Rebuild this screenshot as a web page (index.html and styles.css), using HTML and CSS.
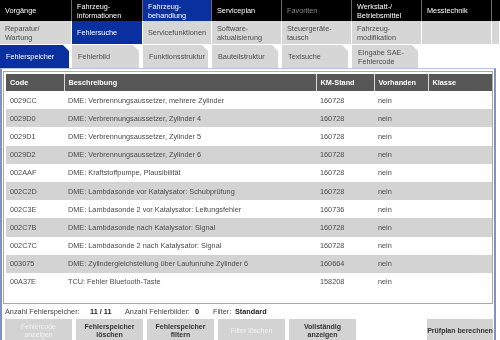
FILE: index.html
```html
<!DOCTYPE html>
<html lang="de">
<head>
<meta charset="utf-8">
<link rel="stylesheet" href="styles.css">
</head>
<body>
<div class="app">
  <nav class="nav nav-main">
    <div class="cell">Vorgänge</div>
    <div class="cell">Fahrzeug-<br>informationen</div>
    <div class="cell active">Fahrzeug-<br>behandlung</div>
    <div class="cell">Serviceplan</div>
    <div class="cell disabled">Favoriten</div>
    <div class="cell">Werkstatt-/<br>Betriebsmittel</div>
    <div class="cell">Messtechnik</div>
    <div class="cell"></div>
  </nav>
  <nav class="nav nav-sub">
    <div class="cell">Reparatur/<br>Wartung</div>
    <div class="cell active">Fehlersuche</div>
    <div class="cell">Servicefunktionen</div>
    <div class="cell">Software-<br>aktualisierung</div>
    <div class="cell">Steuergeräte-<br>tausch</div>
    <div class="cell">Fahrzeug-<br>modifikation</div>
    <div class="cell"></div>
    <div class="cell"></div>
  </nav>
  <nav class="tabs">
    <div class="tab active">Fehlerspeicher</div>
    <div class="tab">Fehlerbild</div>
    <div class="tab">Funktionsstruktur</div>
    <div class="tab">Bauteilstruktur</div>
    <div class="tab">Textsuche</div>
    <div class="tab">Eingabe SAE-<br>Fehlercode</div>
  </nav>
  <section class="panel">
    <div class="listbox">
      <table class="grid">
        <thead>
          <tr><th class="c-code">Code</th><th class="c-desc">Beschreibung</th><th class="c-km">KM-Stand</th><th class="c-vor">Vorhanden</th><th class="c-kl">Klasse</th></tr>
        </thead>
        <tbody>
          <tr><td>0029CC</td><td>DME: Verbrennungsaussetzer, mehrere Zylinder</td><td>160728</td><td>nein</td><td></td></tr>
          <tr><td>0029D0</td><td>DME: Verbrennungsaussetzer, Zylinder 4</td><td>160728</td><td>nein</td><td></td></tr>
          <tr><td>0029D1</td><td>DME: Verbrennungsaussetzer, Zylinder 5</td><td>160728</td><td>nein</td><td></td></tr>
          <tr><td>0029D2</td><td>DME: Verbrennungsaussetzer, Zylinder 6</td><td>160728</td><td>nein</td><td></td></tr>
          <tr><td>002AAF</td><td>DME: Kraftstoffpumpe, Plausibilität</td><td>160728</td><td>nein</td><td></td></tr>
          <tr><td>002C2D</td><td>DME: Lambdasonde vor Katalysator: Schubprüfung</td><td>160728</td><td>nein</td><td></td></tr>
          <tr><td>002C3E</td><td>DME: Lambdasonde 2 vor Katalysator: Leitungsfehler</td><td>160736</td><td>nein</td><td></td></tr>
          <tr><td>002C7B</td><td>DME: Lambdasonde nach Katalysator: Signal</td><td>160728</td><td>nein</td><td></td></tr>
          <tr><td>002C7C</td><td>DME: Lambdasonde 2 nach Katalysator: Signal</td><td>160728</td><td>nein</td><td></td></tr>
          <tr><td>003075</td><td>DME: Zylindergleichstellung über Laufunruhe Zylinder 6</td><td>160664</td><td>nein</td><td></td></tr>
          <tr><td>00A37E</td><td>TCU: Fehler Bluetooth-Taste</td><td>158208</td><td>nein</td><td></td></tr>
        </tbody>
      </table>
    </div>
    <div class="status">
      <span class="lbl l1">Anzahl Fehlerspeicher:</span><b class="val v1">11 / 11</b>
      <span class="lbl l2">Anzahl Fehlerbilder:</span><b class="val v2">0</b>
      <span class="lbl l3">Filter:</span><b class="val">Standard</b>
    </div>
    <div class="buttons">
      <button class="btn" disabled>Fehlercode<br>anzeigen</button>
      <button class="btn">Fehlerspeicher<br>löschen</button>
      <button class="btn">Fehlerspeicher<br>filtern</button>
      <button class="btn" disabled>Filter löschen</button>
      <button class="btn">Vollständig<br>anzeigen</button>
      <span class="spacer"></span>
      <button class="btn wide">Prüfplan berechnen</button>
    </div>
  </section>
</div>
</body>
</html>
```

FILE: styles.css
```css
* { box-sizing: border-box; }
html, body { margin: 0; padding: 0; background: #fff; }
body {
  font-family: "Liberation Sans", Arial, sans-serif;
  font-size: 7.3px;
  line-height: 9px;
  color: #333;
  width: 500px;
  height: 340px;
  overflow: hidden;
}
.app { width: 500px; opacity: 0.999; will-change: transform; }

.nav {
  display: grid;
  grid-template-columns: 72px 71px 69px 70px 70px 70px 70px 1fr;
}
.nav .cell {
  display: flex;
  align-items: center;
  padding-left: 5px;
}
.nav-main { background: #000; height: 21px; }
.nav-main .cell { color: #fff; border-right: 1px solid #6a6a6a; }
.nav-main .cell:last-child { border-right: 0; }
.nav-main .cell.disabled { color: #8a8a8a; }
.nav-main .cell.active { background: #0a2f9f; }

.nav-sub { height: 23px; background: #fff; }
.nav-sub .cell { background: #d6d6d6; color: #4a4a4a; border-right: 1px solid #fff; }
.nav-sub .cell.active { background: #0a2f9f; color: #fff; }

.tabs {
  display: grid;
  grid-template-columns: 72px 71px 69px 70px 70px 70px 1fr;
  height: 24px;
  padding-top: 1px;
}
.tab {
  margin-right: 4px;
  background: linear-gradient(225deg, transparent 4px, #d6d6d6 4.5px);
  color: #4a4a4a;
  display: flex;
  align-items: center;
  padding-left: 6px;
}
.tab:first-child { margin-right: 3px; }
.tab.active { background: linear-gradient(225deg, transparent 4px, #0a2f9f 4.5px); color: #fff; }

.panel {
  border-top: 1px solid #b7c4e6;
  border-left: 2px solid #8291bf;
  border-right: 2px solid #8291bf;
  width: 496px;
  height: 272px;
}
.listbox {
  margin: 2px 1px 0 1px;
  border: 1px solid #a8a8a8;
  height: 233px;
  padding: 2px 2px 0 2px;
}
.grid {
  border-collapse: collapse;
  table-layout: fixed;
  width: 486px;
}
.grid th {
  background: #575757;
  color: #fff;
  font-weight: bold;
  text-align: left;
  height: 17px;
  padding: 0 0 0 4px;
  border-right: 1px solid #d8d8d8;
}
.grid th:last-child { border-right: 0; }
.c-code { width: 58px; }
.c-desc { width: 252px; }
.c-km { width: 58px; }
.c-vor { width: 54px; }
.c-kl { width: 64px; }
.grid td {
  height: 18.2px;
  padding: 0 0 0 4px;
  color: #4a4a4a;
  white-space: nowrap;
}
.grid tbody tr:nth-child(even) td { background: #d3d3d3; }

.status {
  display: flex;
  align-items: center;
  height: 15px;
  padding-left: 3px;
  color: #444;
  white-space: nowrap;
}
.status .val { color: #222; }
.status .l1 { width: 85px; }
.status .v1 { width: 35px; }
.status .l2 { width: 70px; }
.status .v2 { width: 18px; }
.status .l3 { width: 22px; }

.buttons {
  display: flex;
  gap: 4px;
  padding-left: 3px;
  padding-right: 1px;
}
.btn {
  width: 67px;
  height: 24px;
  border: 0;
  background: #d3d3d3;
  color: #333;
  font-family: inherit;
  font-size: 7px;
  line-height: 8px;
  font-weight: bold;
  padding: 0;
  text-align: center;
}
.btn[disabled] { color: #f2f2f2; font-weight: normal; }
.spacer { flex: 1; }
.btn.wide { width: 66px; }
```
